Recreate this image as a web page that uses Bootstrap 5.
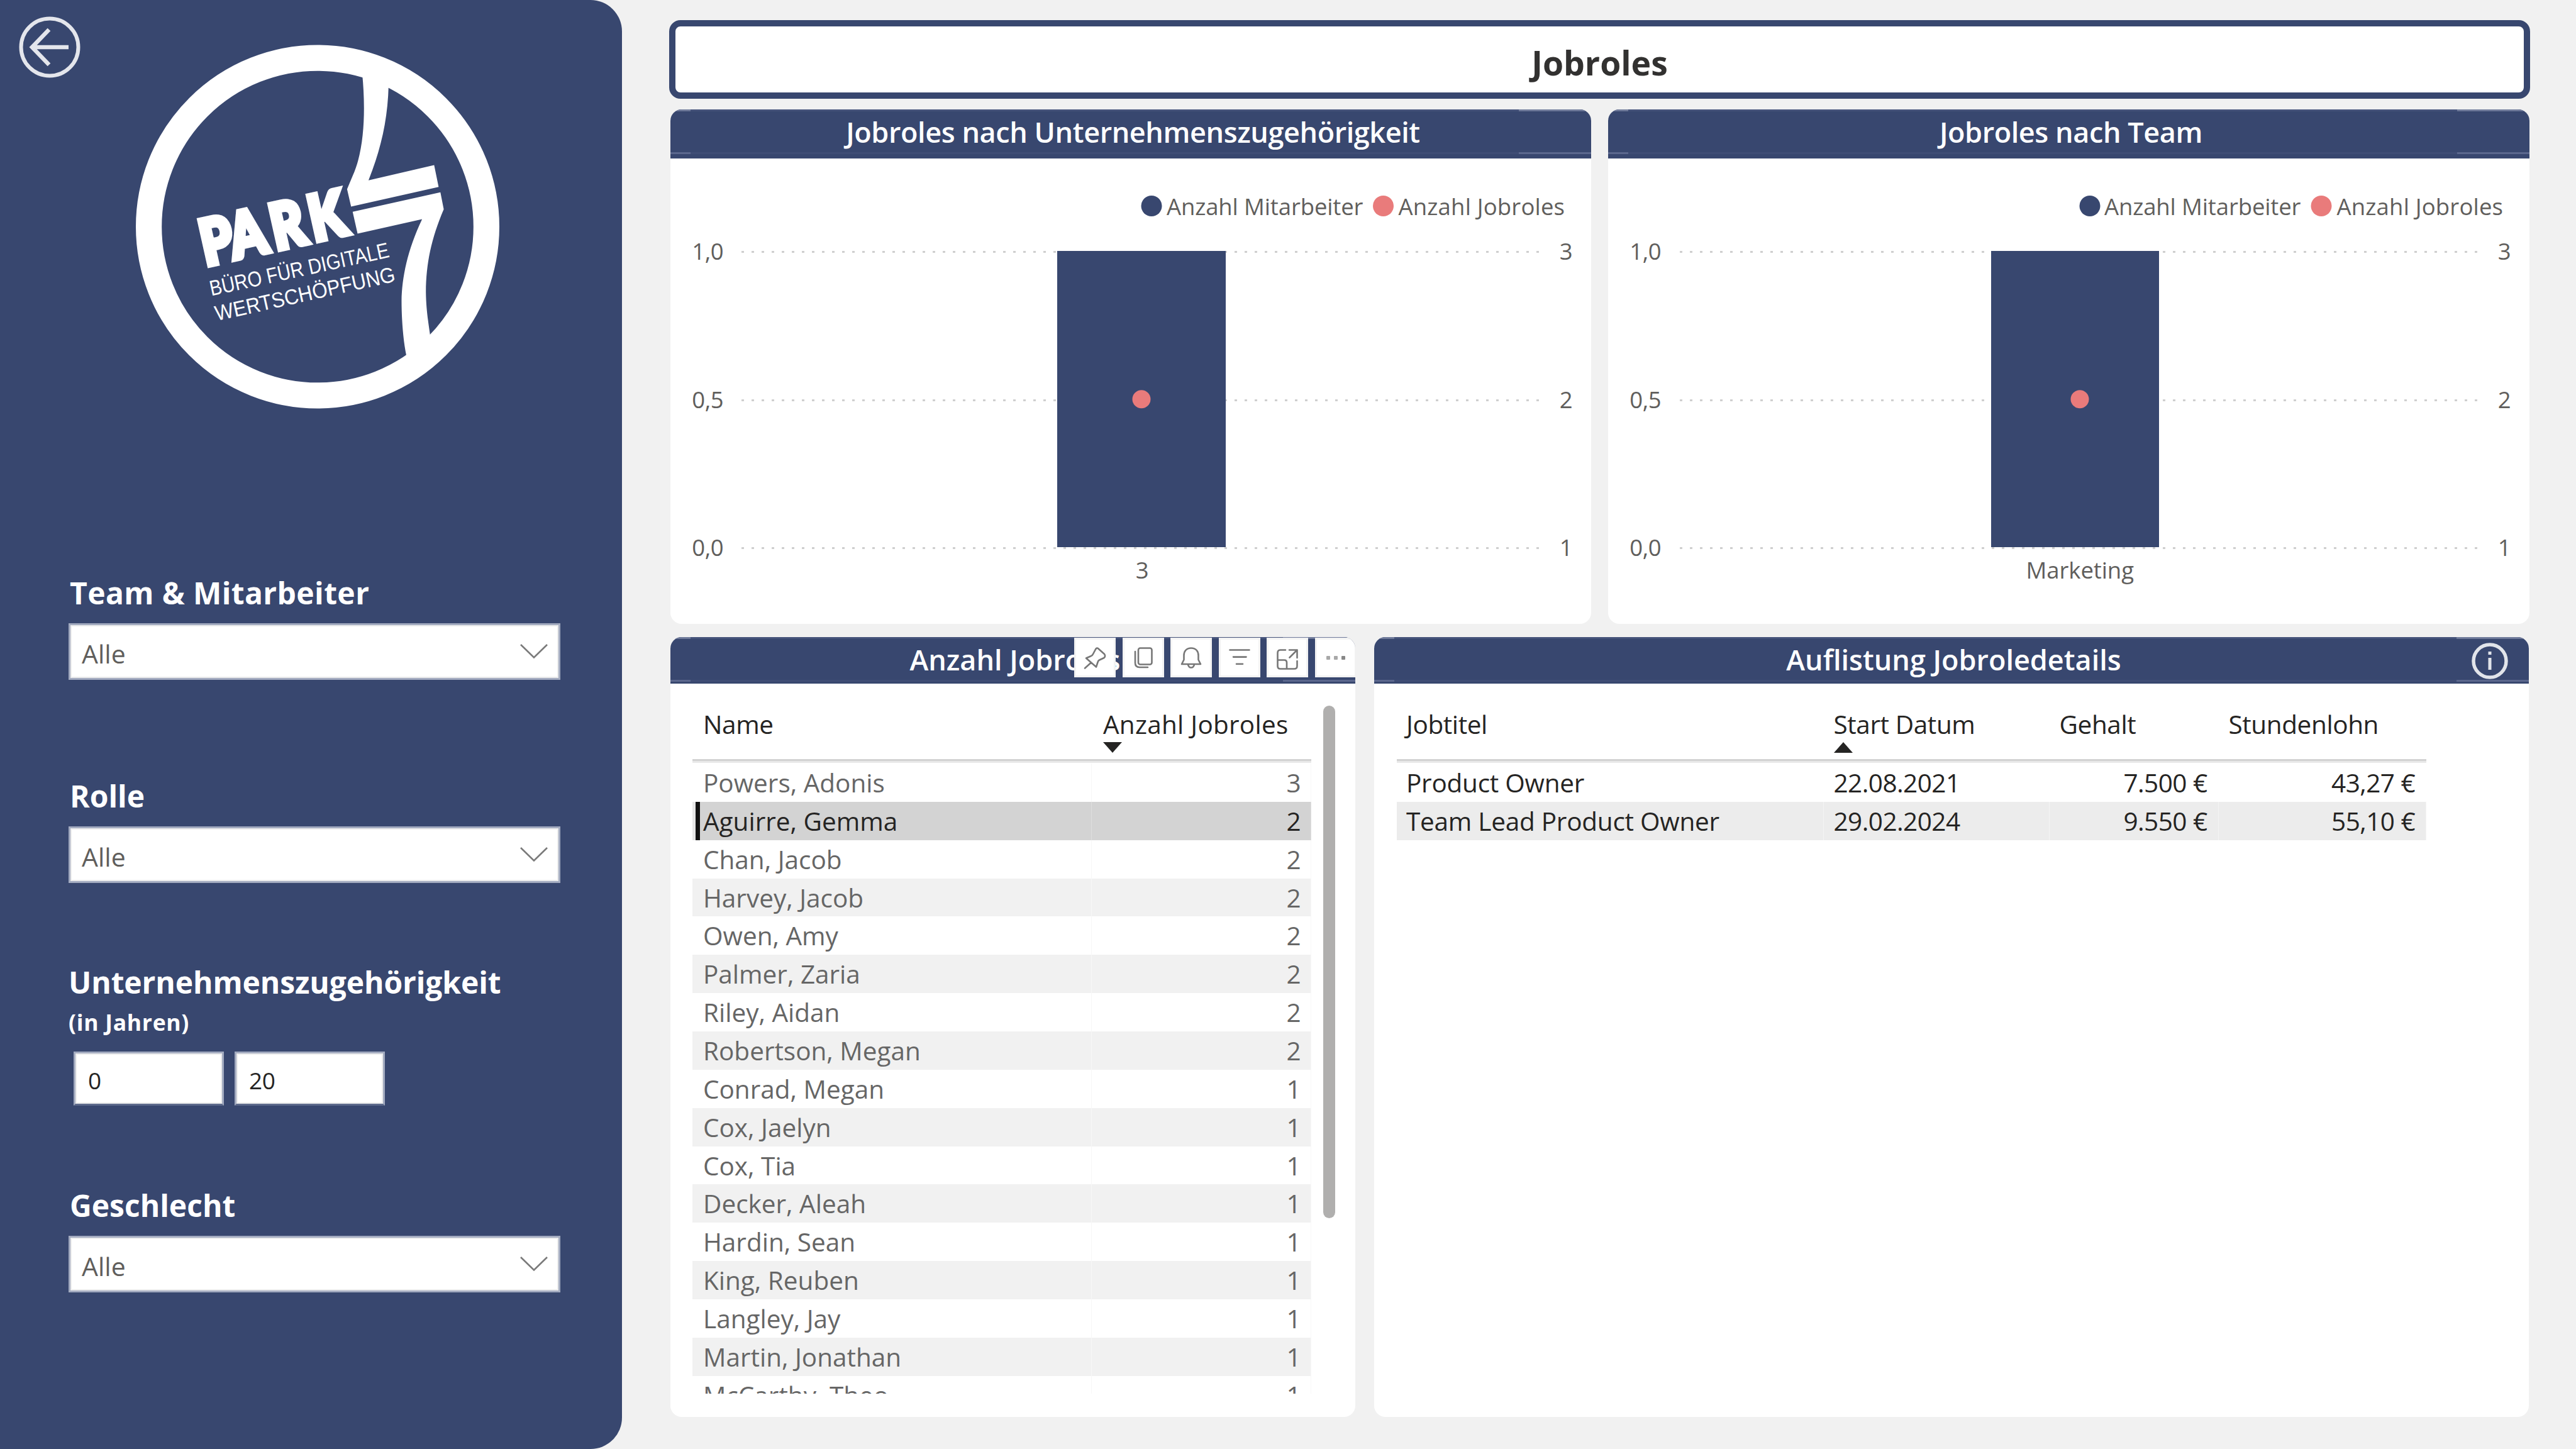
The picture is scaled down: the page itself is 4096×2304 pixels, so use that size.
<!DOCTYPE html>
<html lang="de">
<head>
<meta charset="utf-8">
<title>Jobroles</title>
<link href="https://cdn.jsdelivr.net/npm/bootstrap@5.3.0/dist/css/bootstrap.min.css" rel="stylesheet">
<script src="https://cdn.jsdelivr.net/npm/bootstrap@5.3.0/dist/js/bootstrap.bundle.min.js"></script>
<style>
:root{--navy:#38476f;--coral:#e97b7b;}
html,body{width:4096px;height:2304px;margin:0;overflow:hidden;}
body{background:#f1f1f1;font-family:"Open Sans","Noto Sans",sans-serif;color:#252423;font-size:40.5px;line-height:1;}
svg{display:block;overflow:visible;}
.side{width:989px;height:2304px;background:var(--navy);border-radius:0 50px 50px 0;flex:none;padding:26px 0 0 30px;}
.backbtn{width:98px;height:98px;}
.brandmark{width:578px;height:577px;margin:-52px 0 0 186px;}
.filters{padding-left:79px;color:#fff;}
.filter-team{margin-top:264px;}
.filter-role{margin-top:155px;}
.filter-years{margin-top:128px;}
.filter-gender{margin-top:129px;}
.fhead{font-weight:700;font-size:48px;line-height:60px;letter-spacing:0;padding-left:2px;white-space:nowrap;}
.filter-team .fhead{letter-spacing:.4px;}
.filter-years .fhead{padding-left:0;letter-spacing:-.1px;}
.fsub{font-weight:700;font-size:35.5px;line-height:44px;letter-spacing:.7px;padding:11px 0 0 0;}
.pick{width:782px;height:90px;margin-top:18px;background:#fff;border:3px solid #a3abc0;box-shadow:inset 0 0 0 2px #ececec;color:#605e5c;font-size:41px;line-height:1;padding:7px 17px 0 18px;}
.pick svg{width:44px;height:23px;margin-top:-8px;fill:none;stroke:#7a7a7a;stroke-width:2.6;}
.numrow{gap:17px;margin:25px 0 0 8px;}
.numbox{width:239px;height:86px;background:#fff;border:3px solid #a3abc0;border-bottom-color:#5d6a8c;box-shadow:inset 0 0 0 2px #ececec;color:#252423;font-size:37px;padding:5px 0 0 20px;letter-spacing:-.5px;}
.main{width:2959px;margin-left:75px;padding-top:32px;}
.titlebox{height:125px;border:10px solid var(--navy);border-radius:18px;background:#fff;color:#323130;font-weight:700;font-size:53.5px;padding-top:10px;}
.panel{background:#fff;border-radius:18px;overflow:hidden;position:relative;}
.phead{background:linear-gradient(90deg,#6f7a9a 32px,#45537a 32px,#45537a calc(100% - 115px),#6f7a9a calc(100% - 115px)) 0 0/100% 3px no-repeat,linear-gradient(90deg,#5b678d 32px,#3f4d75 32px,#3f4d75 calc(100% - 115px),#5b678d calc(100% - 115px)) 0 68px/100% 3px no-repeat,var(--navy);color:#fff;font-weight:600;font-size:45px;padding-left:7px;white-space:nowrap;}
.upper .phead{height:78px;padding-bottom:8px;letter-spacing:-.42px;}
.lower .phead{height:74px;padding-bottom:3px;}
.upper{height:818px;margin:17px 1px 0 2px;gap:27px;}
.lower{height:1240px;margin:21px 2px 0 2px;gap:30px;}
.chart text{font-size:36.5px;fill:#605e5c;letter-spacing:-.5px;}
.toolbtns{position:absolute;top:1px;left:642px;gap:10.6px;}
.toolbtn{width:66px;height:63px;flex:none;background:#fff;border:3px solid #f3f3f3;}
.toolbtn svg{width:34px;height:34px;fill:none;stroke:#777;stroke-width:2.6;stroke-linecap:round;stroke-linejoin:round;}
.grid-head{height:123px;border-bottom:3px solid #d2d2d2;box-shadow:0 3px 0 #e8e8e8;margin-bottom:4px;letter-spacing:-.4px;}
.grid-head>div{padding:45px 0 0 17px;white-space:nowrap;line-height:40px;flex:none;}
.grid-head svg{margin-top:8px;}
.names .grid-head .c2{letter-spacing:.25px;padding-left:18px;}
.grow{height:60.87px;line-height:62.4px;letter-spacing:-.55px;}
.grow>div{flex:none;padding:0 17px;white-space:nowrap;border-right:1px solid transparent;}
.names{margin-left:35px;width:984px;height:1129px;overflow:hidden;}
.names .grow{color:#666;}
.names .grow .c1{letter-spacing:0;}
.names .grow .c2{padding-right:16px;}
.names .grow:nth-child(odd){background:#f1f1f1;}
.names .grow.sel{background:#d3d3d3;color:#252423;box-shadow:inset 5px 0 0 #e6e6e6,inset 12px 0 0 #111;}
.names .grow>div{border-color:#f7f7f7;}
.names .grow.sel>div{border-color:#dedede;}
.c1{width:635px;}.c2{width:349px;}
.sbar{width:19px;height:815px;border-radius:10px;background:#b0afae;margin:35px 0 0 19px;}
.details{margin-left:36px;width:1637px;}
.details .grow>div,.details .grid-head>div{padding-left:16px;}
.details .grow .d1,.details .grid-head .d1{padding-left:15px;}
.details .grow .d1{letter-spacing:-.25px;}
.details .grow.alt{background:#ececec;}
.details .grow.alt>div{border-color:#f4f4f4;}
.d1{width:678.5px;}.d2{width:359px;}.d3{width:269px;}.d4{width:330.5px;}
.infoico{position:absolute;right:33px;top:9px;width:58px;height:58px;}
</style>
</head>
<body class="d-flex">
<aside class="side">
  <svg class="backbtn" viewBox="0 0 98 98" fill="none" stroke="#e4e6ec" stroke-width="6"><circle cx="49" cy="49" r="45.5"/><path d="M79 49H22M48 21L21 49L48 77" stroke-width="6.5"/></svg>
  <svg class="brandmark" viewBox="304 101 814 812" fill="#fff">
    <circle cx="711" cy="507" r="378" fill="none" stroke="#fff" stroke-width="58"/>
    <path d="M811 165C818 235 818 330 790 392L777 423L786 462L982 418L972 369L825 403C852 335 868 270 870 190Z"/>
    <path d="M789.500 473.500L986 430L993.500 468C965 535 954 590 953.500 653C954 690 958 715 963 750L912 805C903 770 899 715 899 673C900 620 912 560 945 490L800.500 522.500Z"/>
    <g font-family="Lato" font-weight="900" stroke="#fff" stroke-width="13" stroke-linejoin="miter" stroke-miterlimit="3"><text transform="translate(461 594) rotate(-12.600) scale(.82 1)" font-size="140" x="-1 80 196 303">PARK</text></g>
    <g font-family="Liberation Sans" font-size="48"><text transform="translate(473 662) rotate(-12.300)" textLength="410" lengthAdjust="spacingAndGlyphs">BÜRO FÜR DIGITALE</text><text transform="translate(485 718) rotate(-12.500)" textLength="412" lengthAdjust="spacingAndGlyphs">WERTSCHÖPFUNG</text></g>
  </svg>
  <div class="filters">
    <div class="filter-team">
      <div class="fhead">Team &amp; Mitarbeiter</div>
      <div class="pick d-flex align-items-center justify-content-between"><span>Alle</span><svg viewBox="0 0 44 23"><path d="M1 1L22 21.500L43 1"/></svg></div>
    </div>
    <div class="filter-role">
      <div class="fhead">Rolle</div>
      <div class="pick d-flex align-items-center justify-content-between"><span>Alle</span><svg viewBox="0 0 44 23"><path d="M1 1L22 21.500L43 1"/></svg></div>
    </div>
    <div class="filter-years">
      <div class="fhead">Unternehmenszugehörigkeit</div>
      <div class="fsub">(in Jahren)</div>
      <div class="numrow d-flex"><div class="numbox d-flex align-items-center">0</div><div class="numbox d-flex align-items-center">20</div></div>
    </div>
    <div class="filter-gender">
      <div class="fhead">Geschlecht</div>
      <div class="pick d-flex align-items-center justify-content-between"><span>Alle</span><svg viewBox="0 0 44 23"><path d="M1 1L22 21.500L43 1"/></svg></div>
    </div>
  </div>
</aside>
<main class="main">
  <div class="titlebox d-flex align-items-center justify-content-center">Jobroles</div>
  <div class="upper d-flex">
    <section class="panel" style="width:1464px">
      <div class="phead d-flex align-items-center justify-content-center">Jobroles nach Unternehmenszugehörigkeit</div>
      <svg class="chart" width="1464" height="740" viewBox="0 78 1464 740">
        <circle cx="765" cy="153.500" r="16.500" fill="#38476f"/><text x="789" y="167.500" textLength="312">Anzahl Mitarbeiter</text>
        <circle cx="1133.500" cy="153.500" r="16.500" fill="#e97b7b"/><text x="1157.500" y="167.500" textLength="264">Anzahl Jobroles</text>
        <g stroke="#cfcfcf" stroke-width="3" stroke-dasharray="4 12"><path d="M113 226.500H1387M113 462.500H1387M113 697.500H1387"/></g>
        <rect x="615" y="225" width="268" height="471" fill="#38476f"/>
        <circle cx="749" cy="460.700" r="14.500" fill="#e97b7b"/>
        <g text-anchor="end"><text x="84" y="239">1,0</text><text x="84" y="475">0,5</text><text x="84" y="710">0,0</text><text x="1434" y="239">3</text><text x="1434" y="475">2</text><text x="1434" y="710">1</text></g>
        <text x="750" y="746" text-anchor="middle">3</text>
      </svg>
    </section>
    <section class="panel" style="width:1465px">
      <div class="phead d-flex align-items-center justify-content-center">Jobroles nach Team</div>
      <svg class="chart" width="1465" height="740" viewBox="0 78 1465 740">
        <circle cx="766" cy="153.500" r="16.500" fill="#38476f"/><text x="789" y="167.500" textLength="312">Anzahl Mitarbeiter</text>
        <circle cx="1134" cy="153.500" r="16.500" fill="#e97b7b"/><text x="1158.500" y="167.500" textLength="264">Anzahl Jobroles</text>
        <g stroke="#cfcfcf" stroke-width="3" stroke-dasharray="4 12"><path d="M114 226.500H1388M114 462.500H1388M114 697.500H1388"/></g>
        <rect x="609" y="225" width="267" height="471" fill="#38476f"/>
        <circle cx="750" cy="460.700" r="14.500" fill="#e97b7b"/>
        <g text-anchor="end"><text x="84" y="239">1,0</text><text x="84" y="475">0,5</text><text x="84" y="710">0,0</text><text x="1435" y="239">3</text><text x="1435" y="475">2</text><text x="1435" y="710">1</text></g>
        <text x="750" y="746" text-anchor="middle" textLength="171">Marketing</text>
      </svg>
    </section>
  </div>
  <div class="lower d-flex">
    <section class="panel" style="width:1089px">
      <div class="phead d-flex align-items-center justify-content-center">Anzahl Jobroles</div>
      <div class="toolbtns d-flex">
        <div class="toolbtn d-flex align-items-center justify-content-center"><svg viewBox="0 0 34 34"><path d="M18 3.500Q20 0 22.500 2.500L32 11Q34.500 14.500 31.500 17L24 20.500Q22 21.500 21.500 24L19 31.500L11 24.500L3 17.500L10 14.500Q13 13.500 14 11ZM11 24.500L1 33.500"/></svg></div>
        <div class="toolbtn d-flex align-items-center justify-content-center"><svg viewBox="0 0 34 34"><rect x="9" y="1.500" width="21.500" height="26" rx="3"/><path d="M4 7V25Q4 32 11 32H24"/></svg></div>
        <div class="toolbtn d-flex align-items-center justify-content-center"><svg viewBox="0 0 34 34"><path d="M17 1.500C9 1.500 5.500 7 5.500 13V20L2 27H32L28.500 20V13C28.500 7 25 1.500 17 1.500ZM12 27.500Q13 32.500 17 32.500Q21 32.500 22 27.500"/></svg></div>
        <div class="toolbtn d-flex align-items-center justify-content-center"><svg viewBox="0 0 34 34"><path d="M1.500 4.500H32.500M7 15.600H27.500M12 26.800H22"/></svg></div>
        <div class="toolbtn d-flex align-items-center justify-content-center"><svg viewBox="0 0 34 34"><path d="M14 4.500H6Q1.500 4.500 1.500 9V30Q1.500 34.500 6 34.500H28Q32.500 34.500 32.500 30V22M1.500 20.500H12Q16 20.500 16 24.500V34.500M20 4.500H32.500V17M32.500 4.500L20.500 16.500"/></svg></div>
        <div class="toolbtn d-flex align-items-center justify-content-center"><svg viewBox="0 0 34 34"><g fill="#a8a8a8" stroke="none"><rect x="2" y="14" width="6" height="6" rx="1"/><rect x="14" y="14" width="6" height="6" rx="1"/><rect x="26" y="14" width="6" height="6" rx="1" fill="#888"/></g></svg></div>
      </div>
      <div class="d-flex">
        <div class="names">
          <div class="grid-head d-flex"><div class="c1">Name</div><div class="c2">Anzahl Jobroles<svg width="30" height="17" viewBox="0 0 30 17"><path d="M0 0H30L15 17Z" fill="#252423"/></svg></div></div>
          <div class="grow d-flex"><div class="c1">Powers, Adonis</div><div class="c2 text-end">3</div></div>
          <div class="grow d-flex sel"><div class="c1">Aguirre, Gemma</div><div class="c2 text-end">2</div></div>
          <div class="grow d-flex"><div class="c1">Chan, Jacob</div><div class="c2 text-end">2</div></div>
          <div class="grow d-flex"><div class="c1">Harvey, Jacob</div><div class="c2 text-end">2</div></div>
          <div class="grow d-flex"><div class="c1">Owen, Amy</div><div class="c2 text-end">2</div></div>
          <div class="grow d-flex"><div class="c1">Palmer, Zaria</div><div class="c2 text-end">2</div></div>
          <div class="grow d-flex"><div class="c1">Riley, Aidan</div><div class="c2 text-end">2</div></div>
          <div class="grow d-flex"><div class="c1">Robertson, Megan</div><div class="c2 text-end">2</div></div>
          <div class="grow d-flex"><div class="c1">Conrad, Megan</div><div class="c2 text-end">1</div></div>
          <div class="grow d-flex"><div class="c1">Cox, Jaelyn</div><div class="c2 text-end">1</div></div>
          <div class="grow d-flex"><div class="c1">Cox, Tia</div><div class="c2 text-end">1</div></div>
          <div class="grow d-flex"><div class="c1">Decker, Aleah</div><div class="c2 text-end">1</div></div>
          <div class="grow d-flex"><div class="c1">Hardin, Sean</div><div class="c2 text-end">1</div></div>
          <div class="grow d-flex"><div class="c1">King, Reuben</div><div class="c2 text-end">1</div></div>
          <div class="grow d-flex"><div class="c1">Langley, Jay</div><div class="c2 text-end">1</div></div>
          <div class="grow d-flex"><div class="c1">Martin, Jonathan</div><div class="c2 text-end">1</div></div>
          <div class="grow d-flex"><div class="c1">McCarthy, Theo</div><div class="c2 text-end">1</div></div>
        </div>
        <div class="sbar"></div>
      </div>
    </section>
    <section class="panel" style="width:1836px">
      <div class="phead d-flex align-items-center justify-content-center">Auflistung Jobroledetails</div>
      <svg class="infoico" viewBox="0 0 58 58"><circle cx="29" cy="29" r="26" fill="none" stroke="#e1e4ea" stroke-width="5.500"/><path d="M29 24V43M29 14V19" stroke="#e1e4ea" stroke-width="5"/></svg>
      <div class="details">
        <div class="grid-head d-flex"><div class="d1">Jobtitel</div><div class="d2">Start Datum<svg width="30" height="17" viewBox="0 0 30 17"><path d="M0 17H30L15 0Z" fill="#252423"/></svg></div><div class="d3">Gehalt</div><div class="d4">Stundenlohn</div></div>
        <div class="grow d-flex"><div class="d1">Product Owner</div><div class="d2">22.08.2021</div><div class="d3 text-end">7.500 €</div><div class="d4 text-end">43,27 €</div></div>
        <div class="grow d-flex alt"><div class="d1">Team Lead Product Owner</div><div class="d2">29.02.2024</div><div class="d3 text-end">9.550 €</div><div class="d4 text-end">55,10 €</div></div>
      </div>
    </section>
  </div>
</main>
</body>
</html>
